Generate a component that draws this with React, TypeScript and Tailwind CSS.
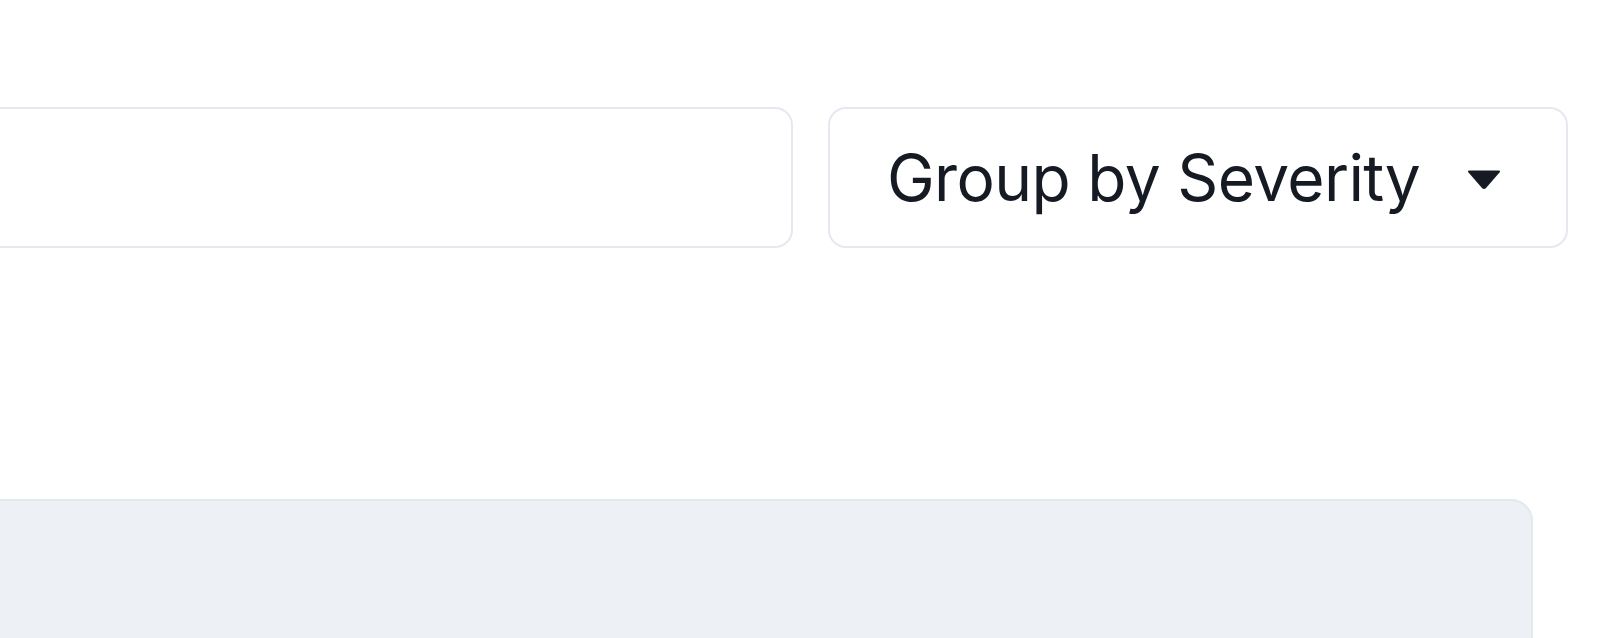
import { useState } from "react";

const groupOptions = ["Severity", "Status", "Category"];

export default function App(): React.JSX.Element {
  const [query, setQuery] = useState("");
  const [groupBy] = useState(groupOptions[0]);

  return (
    <div className="h-[638px] w-[1600px] overflow-hidden bg-white font-['Inter','Liberation_Sans',sans-serif]">
      {/* Toolbar */}
      <div className="ml-[-60px] mr-[32px] flex gap-[35px] pt-[107px]">
        <input
          type="text"
          value={query}
          onChange={(e) => setQuery(e.target.value)}
          className="h-[141px] min-w-0 flex-1 rounded-[18px] border-2 border-[#e5e8ef] bg-white px-[40px] text-[64px] text-[#1b1f29] outline-none"
        />
        <button className="flex h-[141px] w-[740px] shrink-0 items-center justify-between whitespace-nowrap rounded-[18px] border-2 border-[#e5e8ef] bg-white pl-[57px] pr-[64px] text-[64px] tracking-[-0.01em] text-[#161a23]">
          <span>Group by {groupBy}</span>
          <svg width="36" height="22" viewBox="0 0 36 22" className="mt-[4px] shrink-0">
            <path
              d="M3.5 1.5 H32.5 Q35 1.5 33.5 3.5 L20 19 Q18 21 16 19 L2.5 3.5 Q1 1.5 3.5 1.5 Z"
              fill="#161a23"
            />
          </svg>
        </button>
      </div>

      {/* Results panel */}
      <div className="ml-[-60px] mr-[67px] mt-[251px] h-[200px] rounded-[22px] border-2 border-[#e4e8ef] bg-[#edf0f5]" />
    </div>
  );
}
